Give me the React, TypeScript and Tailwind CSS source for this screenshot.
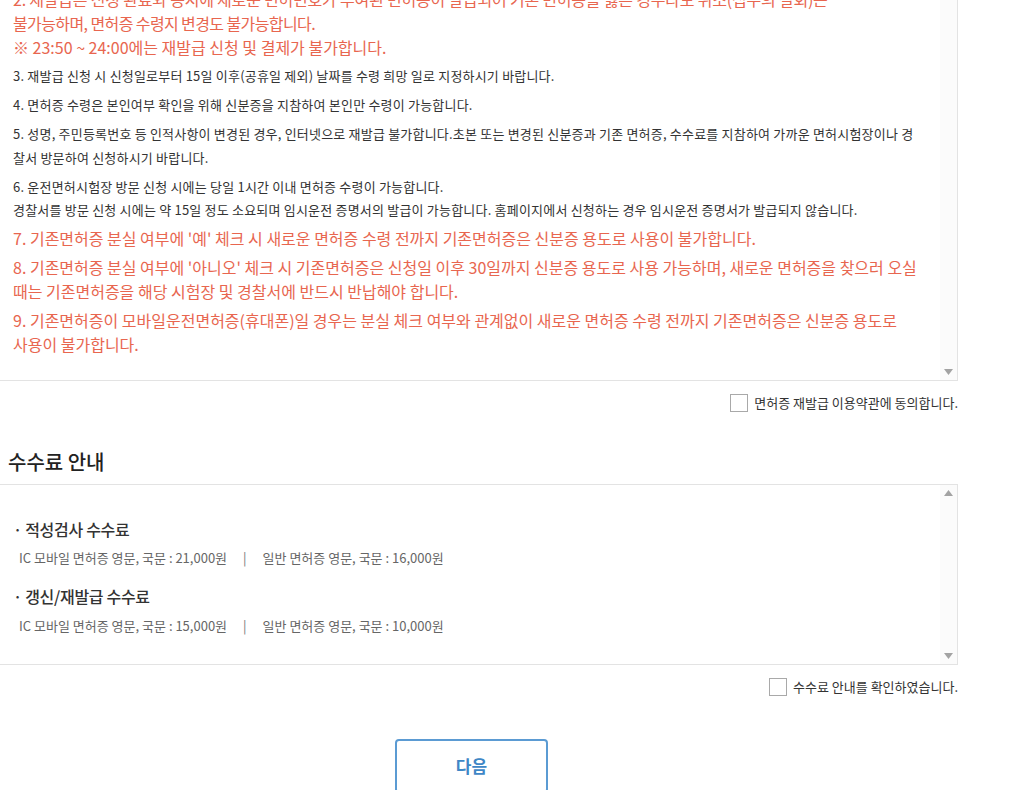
import React from "react";

const font = { fontFamily: '"Noto Sans CJK KR", "Noto Sans", sans-serif' };

function Arrow({ dir }: { dir: "up" | "down" }) {
  return (
    <svg width="9" height="6" viewBox="0 0 9 6" className="block">
      {dir === "up" ? (
        <polygon points="4.5,0 9,6 0,6" fill="#a3a3a3" />
      ) : (
        <polygon points="0,0 9,0 4.5,6" fill="#a3a3a3" />
      )}
    </svg>
  );
}

function ScrollTrack({ up, down }: { up?: boolean; down?: boolean }) {
  return (
    <div className="w-[17px] shrink-0 bg-[#fbfbfb] flex flex-col justify-between items-center py-[5px]">
      <div>{up ? <Arrow dir="up" /> : null}</div>
      <div>{down ? <Arrow dir="down" /> : null}</div>
    </div>
  );
}

function Check({ label }: { label: string }) {
  return (
    <label className="flex items-center justify-end gap-[6px]">
      <span className="w-[18px] h-[18px] border border-[#a9a9a9] bg-white block" />
      <span className="text-[13px] text-[#333] leading-[18px]">{label}</span>
    </label>
  );
}

const red = "text-[16px] leading-[24px] text-[#e8664f]";
const dark = "text-[13px] leading-[24px] text-[#333] tracking-[0.2px]";

export default function App() {
  return (
    <div className="w-[1024px] h-[790px] overflow-hidden bg-white" style={font}>
      <div className="w-[958px] -mt-[34px]">
        {/* terms box */}
        <div className="-ml-px border border-[#e3e3e3] flex">
          <div className="flex-1 pl-[13px] pt-[20px] pb-[24px] flex flex-col gap-[5px]">
            <p className={red}>
              <span className="tracking-[-0.2px]">
                2. 재발급은 신청 완료와 동시에 새로운 면허번호가 부여된 면허증이 발급되어 기존 면허증을 잃은 경우라도 취소(접수의 철회)는
              </span>
              <br />
              <span className="tracking-[-0.6px]">불가능하며, 면허증 수령지 변경도 불가능합니다.</span>
              <br />※ 23:50 ~ 24:00에는 재발급 신청 및 결제가 불가합니다.
            </p>
            <p className={dark}>
              3. 재발급 신청 시 신청일로부터 15일 이후(공휴일 제외) 날짜를 수령 희망 일로 지정하시기 바랍니다.
            </p>
            <p className={dark}>
              4. 면허증 수령은 본인여부 확인을 위해 신분증을 지참하여 본인만 수령이 가능합니다.
            </p>
            <p className={dark}>
              5. 성명, 주민등록번호 등 인적사항이 변경된 경우, 인터넷으로 재발급 불가합니다.초본 또는 변경된 신분증과 기존 면허증, 수수료를 지참하여 가까운 면허시험장이나 경
              <br />
              찰서 방문하여 신청하시기 바랍니다.
            </p>
            <p className="text-[13px] leading-[23px] text-[#333] tracking-[0.2px]">
              6. 운전면허시험장 방문 신청 시에는 당일 1시간 이내 면허증 수령이 가능합니다.
              <br />
              경찰서를 방문 신청 시에는 약 15일 정도 소요되며 임시운전 증명서의 발급이 가능합니다. 홈페이지에서 신청하는 경우 임시운전 증명서가 발급되지 않습니다.
            </p>
            <p className={red}>
              7. 기존면허증 분실 여부에 '예' 체크 시 새로운 면허증 수령 전까지 기존면허증은 신분증 용도로 사용이 불가합니다.
            </p>
            <p className={red}>
              8. 기존면허증 분실 여부에 '아니오' 체크 시 기존면허증은 신청일 이후 30일까지 신분증 용도로 사용 가능하며, 새로운 면허증을 찾으러 오실
              <br />
              때는 기존면허증을 해당 시험장 및 경찰서에 반드시 반납해야 합니다.
            </p>
            <p className={red}>
              9. 기존면허증이 모바일운전면허증(휴대폰)일 경우는 분실 체크 여부와 관계없이 새로운 면허증 수령 전까지 기존면허증은 신분증 용도로
              <br />
              사용이 불가합니다.
            </p>
          </div>
          <ScrollTrack down />
        </div>

        <div className="mt-[13px]">
          <Check label="면허증 재발급 이용약관에 동의합니다." />
        </div>

        <h2 className="mt-[36px] pl-[8px] text-[20px] leading-[28px] text-[#222] font-medium">수수료 안내</h2>

        <div className="mt-[8px] -ml-px border border-[#e3e3e3] flex h-[181px]">
          <div className="flex-1 pl-[13px] pt-[32px]">
            <div className="text-[16px] leading-[24px] text-[#333] font-medium tracking-[-0.3px]">· 적성검사 수수료</div>
            <div className="mt-[7px] pl-[6px] text-[13px] leading-[20px] text-[#666]">
              IC 모바일 면허증 영문, 국문 : 21,000원<span className="mx-[16px] text-[#777]">|</span>일반 면허증 영문, 국문 : 16,000원
            </div>
            <div className="mt-[16px] text-[16px] leading-[24px] text-[#333] font-medium tracking-[-0.3px]">· 갱신/재발급 수수료</div>
            <div className="mt-[8px] pl-[6px] text-[13px] leading-[20px] text-[#666]">
              IC 모바일 면허증 영문, 국문 : 15,000원<span className="mx-[16px] text-[#777]">|</span>일반 면허증 영문, 국문 : 10,000원
            </div>
          </div>
          <ScrollTrack up down />
        </div>

        <div className="mt-[13px]">
          <Check label="수수료 안내를 확인하였습니다." />
        </div>
      </div>

      <div className="mt-[43px] pl-[395px]">
        <button className="w-[153px] h-[54px] border-2 border-[#5b9bd3] rounded-[4px] bg-white text-[#3f87c6] text-[17px] font-bold">
          다음
        </button>
      </div>
    </div>
  );
}
